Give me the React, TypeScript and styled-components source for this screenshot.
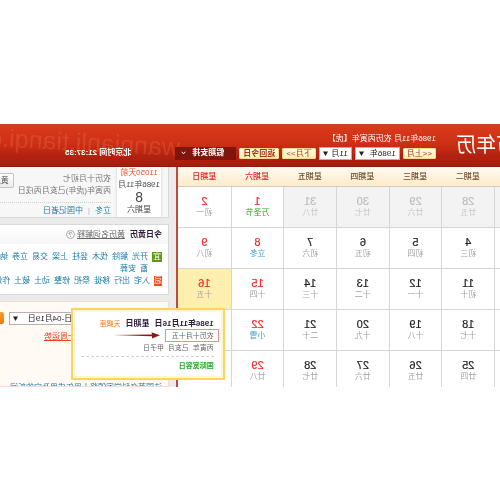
import React from "react";
import styled, { createGlobalStyle, css } from "styled-components";

const GlobalStyle = createGlobalStyle`
  * { box-sizing: border-box; }
  body {
    margin: 0;
    background: #fff;
    color: #555;
    font: 8px/12px "Liberation Sans", "Noto Sans CJK SC", sans-serif;
    overflow-x: hidden;
  }
  button, select { font: inherit; color: inherit; margin: 0; }
  a { color: inherit; text-decoration: none; }
`;

/* The whole page is shown as a mirror image. */
const Mirror = styled.main`
  margin-top: 124px;
  overflow: hidden;
  white-space: nowrap;
  transform: scaleX(-1);
`;

const Header = styled.header`
  position: relative;
  display: flex;
  height: 43px;
  overflow: hidden;
  color: #fff;
  background: linear-gradient(#d93a1b 0%, #cd3014 45%, #b32210 75%, #a51d0d 100%);
  border-top: 1px solid #b8432f;
  border-bottom: 1px solid #8f1a0c;
`;

const Watermark = styled.span`
  position: absolute;
  left: 64%;
  top: 8px;
  font-size: 25px;
  line-height: 28px;
  color: rgba(255, 150, 120, 0.2);
  transform: rotate(-3deg);
  transform-origin: left center;
`;

const Title = styled.h1`
  margin: 7px 20px 0 -16px;
  font-size: 20px;
  line-height: 26px;
  font-weight: 400;
`;

const Info = styled.div`
  position: relative;
  padding-top: 8px;
`;

const Controls = styled.div`
  display: flex;
  align-items: center;
  gap: 3px;
  height: 16px;
`;

const PaleButton = styled.button`
  padding: 0 3px;
  height: 11px;
  line-height: 9px;
  border: 1px solid #f6dc8a;
  border-radius: 1px;
  background: linear-gradient(#fffbe6, #fdeeb0);
  color: #a13b10;
`;

const TodayButton = styled(PaleButton)`
  width: 40px;
  font-weight: 700;
`;

const Picker = styled.span<{ $width: number }>`
  position: relative;
  display: block;
  flex: none;
  width: ${(p) => p.$width}px;
  height: 13px;
  color: #222;

  select {
    display: block;
    appearance: none;
    width: 100%;
    height: 100%;
    padding: 0 3px;
    border: 1px solid #b9b0ad;
    border-radius: 0;
    background: #fff;
    line-height: 11px;
  }

  svg {
    position: absolute;
    right: 4px;
    top: 4px;
    pointer-events: none;
  }
`;

const HolidayButton = styled.button`
  display: flex;
  align-items: center;
  justify-content: space-between;
  width: 61px;
  height: 13px;
  padding: 0 6px;
  border: 0;
  background: #7f150b;
  color: #fff;
  font-weight: 700;
`;

const Clock = styled.strong`
  margin-left: 41px;
`;

const Body = styled.div`
  display: grid;
  grid-template-columns: minmax(0, 324fr) minmax(0, 176fr);
`;

const CalendarPane = styled.section`
  position: relative;
  z-index: 1;
  border-right: 2px solid #bf4a40;
`;

const Calendar = styled.table`
  width: 100%;
  table-layout: fixed;
  border-collapse: separate;
  border-spacing: 0;
`;

const EdgeCol = styled.col`
  width: 6px;
`;

const DayName = styled.th<{ $weekend?: boolean }>`
  height: 20px;
  padding: 0;
  border-bottom: 1px solid #d3cbc0;
  background: linear-gradient(#fffaf0, #fdebcb);
  color: ${(p) => (p.$weekend ? "#e02222" : "#6b5030")};
  font-weight: 500;
`;

type CellKind = "out" | "weekend" | "today" | undefined;

const DayCell = styled.td<{ $kind?: CellKind; $last?: boolean }>`
  height: ${(p) => (p.$last ? 36 : 41)}px;
  padding: 7px 0 0;
  vertical-align: top;
  text-align: center;
  border-right: 1px solid #d6d6d6;
  border-bottom: ${(p) => (p.$last ? 0 : 1)}px solid #d6d6d6;
  color: #222;

  &:first-child { padding: 0; }
  &:last-child { border-right: 0; }

  ${(p) => p.$kind === "out" && css`background: #f3f3f3; color: #bdbdbd;`}
  ${(p) => (p.$kind === "weekend" || p.$kind === "today") && css`color: #f02a2a;`}
  ${(p) => p.$kind === "today" && css`position: relative; background: #feefaf;`}
`;

const DayNumber = styled.span`
  display: block;
  font-size: 11px;
  line-height: 14px;
  -webkit-text-stroke: 0.2px currentColor;
`;

const Lunar = styled.span<{ $color?: string }>`
  display: block;
  font-size: 8px;
  line-height: 10px;
  color: ${(p) => p.$color ?? "#a3a3a3"};
`;

const Popup = styled.aside`
  position: absolute;
  z-index: 2;
  left: 6px;
  top: 39px;
  width: 154px;
  height: 72px;
  padding: 8px 8px 0 9px;
  border: 2px solid #fdd45c;
  background: #fff;
  box-shadow: inset 0 0 0 2px #fff6d2;
  color: #666;
  text-align: left;
  font-size: 7px;
  line-height: 11px;
`;

const PopupHead = styled.div`
  display: flex;
  gap: 5px;
  font-size: 8px;
  color: #2c1c38;
`;

const Sign = styled.span`
  font-size: 7px;
  color: #ff7a1c;
`;

const Marked = styled.div`
  display: flex;
  align-items: center;
  gap: 5px;
  margin-left: -5px;
`;

const MarkedText = styled.span`
  width: 54px;
  height: 13px;
  padding-left: 4px;
  line-height: 11px;
  border: 1px solid #f58a8a;
`;

const Festival = styled.div`
  margin-top: 3px;
  padding-top: 3px;
  border-top: 1px dashed #d4d4d4;
  color: #25a82c;
  font-weight: 700;
`;

const Side = styled.section`
  display: flex;
  flex-direction: column;
  gap: 6px;
  padding-left: 7px;
  background: #ebebeb;
  overflow: hidden;
`;

const Panel = styled.div<{ $warm?: boolean; $grow?: boolean }>`
  border: 1px solid ${(p) => (p.$warm ? "#f3ddd0" : "#d9d9d9")};
  border-right: 0;
  background: ${(p) => (p.$warm ? "#fffaf3" : "#fff")};
  flex: ${(p) => (p.$grow ? "1 0 auto" : "none")};
`;

const DayPanel = styled(Panel)`
  display: flex;
  height: 51px;
  padding-left: 7px;
  border-top: 0;
  background: #f7f7f7;
`;

const DayCard = styled.div`
  width: 44px;
  height: 50px;
  background: #fff;
  box-shadow: 0 0 3px #d0d0d0;
  text-align: center;
  line-height: 12px;
  color: #444;
`;

const Ago = styled.div`
  color: #f2502c;
`;

const BigDay = styled.div`
  font-size: 14px;
  line-height: 13px;
`;

const DayText = styled.div`
  flex: 1;
  min-width: 0;
  padding: 6px 0 0 6px;
  color: #777;
`;

const DayLines = styled.div`
  display: flex;
  gap: 4px;
`;

const GreyButton = styled.button`
  flex: none;
  height: 15px;
  padding: 0 4px;
  border: 1px solid #c4c4c4;
  border-radius: 2px;
  background: linear-gradient(#fff, #ececec);
  color: #555;
`;

const Festivals = styled.div`
  display: flex;
  gap: 5px;
  margin-top: 5px;
  padding-top: 2px;
  border-top: 1px dotted #d0d0d0;
  color: #bbb;
  a { color: #1d7ca6; }
`;

const AlmanacPanel = styled(Panel)`
  height: 71px;
`;

const AlmanacHead = styled.div`
  display: flex;
  align-items: center;
  gap: 5px;
  height: 19px;
  padding-left: 6px;
  background: linear-gradient(#fff, #f6f6f6);

  h2 { margin: 0; font-size: 8px; color: #2c1c38; }
  a { color: #666; text-decoration: underline; }
  svg { margin-left: -3px; }
`;

const AlmanacList = styled.div`
  padding: 7px 0 0 6px;
  color: #1d7ca6;
`;

const AlmanacRow = styled.div`
  display: flex;
  gap: 4px;
`;

const Badge = styled.span<{ $color: string }>`
  width: 10px;
  height: 10px;
  margin: 1px 0;
  background: ${(p) => p.$color};
  color: #fff;
  line-height: 10px;
  text-align: center;
`;

const WordLine = styled.span`
  display: flex;
  gap: 4px;
`;

const FortunePanel = styled(Panel)`
  display: flex;
  flex-direction: column;
  padding: 10px 0 0 66px;
`;

const FortuneRow = styled.div`
  display: flex;
  gap: 5px;
`;

const OrangeButton = styled.button`
  flex: none;
  width: 30px;
  height: 12px;
  padding: 0 4px;
  border: 0;
  border-radius: 2px;
  background: linear-gradient(#ff9d2a, #f97808);
  color: #fff;
  text-align: left;
`;

const FortuneLink = styled.a`
  align-self: flex-start;
  margin: 6px 0 0 26px;
  color: #f03c20;
  text-decoration: underline;
`;

const NewsLine = styled.a`
  height: 4px;
  margin: auto 0 0 -60px;
  line-height: 11px;
  overflow: hidden;
  color: #1d7ca6;
`;

const Triangle = () => (
  <svg width="5" height="5" viewBox="0 0 5 5" aria-hidden="true">
    <path d="M0 0.5h5L2.5 5z" fill="#222" />
  </svg>
);

type Day = { n: number; l: string; k?: CellKind; c?: string };

const weeks: (Day | null)[][] = [
  [
    { n: 28, l: "廿五", k: "out", c: "#c8c8c8" },
    { n: 29, l: "廿六", k: "out", c: "#c8c8c8" },
    { n: 30, l: "廿七", k: "out", c: "#c8c8c8" },
    { n: 31, l: "廿八", k: "out", c: "#c8c8c8" },
    { n: 1, l: "万圣节", k: "weekend", c: "#25a82c" },
    { n: 2, l: "初一", k: "weekend" },
  ],
  [
    { n: 4, l: "初三" },
    { n: 5, l: "初四" },
    { n: 6, l: "初五" },
    { n: 7, l: "初六" },
    { n: 8, l: "立冬", k: "weekend", c: "#3a9bc8" },
    { n: 9, l: "初八", k: "weekend" },
  ],
  [
    { n: 11, l: "初十" },
    { n: 12, l: "十一" },
    { n: 13, l: "十二" },
    { n: 14, l: "十三" },
    { n: 15, l: "十四", k: "weekend" },
    { n: 16, l: "十五", k: "today" },
  ],
  [
    { n: 18, l: "十七" },
    { n: 19, l: "十八" },
    { n: 20, l: "十九" },
    { n: 21, l: "二十" },
    { n: 22, l: "小雪", k: "weekend", c: "#3a9bc8" },
    null,
  ],
  [
    { n: 25, l: "廿四" },
    { n: 26, l: "廿五" },
    { n: 27, l: "廿六" },
    { n: 28, l: "廿七" },
    { n: 29, l: "廿八", k: "weekend" },
    null,
  ],
];

const dayNames = ["星期二", "星期三", "星期四", "星期五", "星期六", "星期日"];
const suitable = ["开光", "解除", "伐木", "竖柱", "上梁", "交易", "立券", "纳"];
const suitableRest = ["畜", "安葬"];
const avoid = ["入宅", "出行", "移徙", "祭祀", "修整", "动土", "破土", "作灶"];

function WordList({ words }: { words: string[] }) {
  return (
    <WordLine>
      {words.map((word) => <span key={word}>{word}</span>)}
    </WordLine>
  );
}

function DayPopup() {
  return (
    <Popup>
      <PopupHead>
        <strong>1986年11月16日</strong>
        <strong>星期日</strong>
        <Sign>天蝎座</Sign>
      </PopupHead>
      <Marked>
        <MarkedText>农历十月十五</MarkedText>
        <svg width="47" height="7" viewBox="0 0 47 7" aria-hidden="true">
          <path d="M47 3.1L8 2.4L8.5 0.2L0 3.2L8 6.6L8 4.2z" fill="#8e1616" />
        </svg>
      </Marked>
      <div>丙寅年&nbsp; 己亥月&nbsp; 甲子日</div>
      <Festival>国际宽容日</Festival>
    </Popup>
  );
}

export default function App() {
  return (
    <>
      <GlobalStyle />
      <Mirror>
        <Header>
          <Watermark>wannianli.tianqi.com</Watermark>
          <Title>万年历</Title>
          <Info>
            <div>1986年11月 农历丙寅年【虎】</div>
            <Controls>
              <PaleButton>&lt;&lt;上月</PaleButton>
              <Picker $width={45}>
                <select aria-label="年份"><option>1986年</option></select>
                <Triangle />
              </Picker>
              <Picker $width={33}>
                <select aria-label="月份"><option>11月</option></select>
                <Triangle />
              </Picker>
              <PaleButton>下月&gt;&gt;</PaleButton>
              <TodayButton>返回今日</TodayButton>
              <HolidayButton>
                <span />
                假期安排
                <svg width="5" height="4" viewBox="0 0 5 4" aria-hidden="true">
                  <path d="M0.5 0.7L2.5 2.8L4.5 0.7" fill="none" stroke="#fff" />
                </svg>
              </HolidayButton>
              <Clock>北京时间 21:37:35</Clock>
            </Controls>
          </Info>
        </Header>

        <Body>
          <CalendarPane>
            <Calendar>
              <colgroup>
                <EdgeCol />
                {dayNames.map((d) => <col key={d} />)}
              </colgroup>
              <thead>
                <tr>
                  <DayName />
                  {dayNames.map((d, i) => (
                    <DayName key={d} $weekend={i > 3}>{d}</DayName>
                  ))}
                </tr>
              </thead>
              <tbody>
                {weeks.map((week, w) => {
                  const last = w === weeks.length - 1;
                  return (
                    <tr key={w}>
                      <DayCell $kind={w === 0 ? "out" : undefined} $last={last} />
                      {week.map((d, i) => (
                        <DayCell key={i} $kind={d?.k} $last={last}>
                          {d && <DayNumber>{d.n}</DayNumber>}
                          {d && <Lunar $color={d.c}>{d.l}</Lunar>}
                          {d?.k === "today" && <DayPopup />}
                        </DayCell>
                      ))}
                    </tr>
                  );
                })}
              </tbody>
            </Calendar>
          </CalendarPane>

          <Side>
            <DayPanel>
              <DayCard>
                <Ago>11050天前</Ago>
                <div>1986年11月</div>
                <BigDay>8</BigDay>
                <div>星期六</div>
              </DayCard>
              <DayText>
                <DayLines>
                  <div>
                    <div>农历十月初七</div>
                    <div>丙寅年(虎年)己亥月丙戌日</div>
                  </div>
                  <GreyButton>黄历</GreyButton>
                </DayLines>
                <Festivals>
                  <a href="#lidong">立冬</a>|<a href="#reporters">中国记者日</a>
                </Festivals>
              </DayText>
            </DayPanel>

            <AlmanacPanel>
              <AlmanacHead>
                <h2>今日黄历</h2>
                <a href="#terms">黄历名词解释</a>
                <svg width="9" height="9" viewBox="0 0 9 9" aria-hidden="true">
                  <circle cx="4.5" cy="4.5" r="4" fill="#fff" stroke="#999" strokeWidth="0.8" />
                  <path d="M3.2 3.6c0-1.8 2.6-1.6 2.6-0.2c0 0.9-1.3 0.9-1.3 2M4.5 6.2v0.9" fill="none" stroke="#777" strokeWidth="0.8" />
                </svg>
              </AlmanacHead>
              <AlmanacList>
                <AlmanacRow>
                  <Badge $color="#5a9a10">宜</Badge>
                  <div>
                    <WordList words={suitable} />
                    <WordList words={suitableRest} />
                  </div>
                </AlmanacRow>
                <AlmanacRow>
                  <Badge $color="#fa4a10">忌</Badge>
                  <WordList words={avoid} />
                </AlmanacRow>
              </AlmanacList>
            </AlmanacPanel>

            <FortunePanel $warm $grow>
              <FortuneRow>
                <Picker $width={93}>
                  <select aria-label="星座"><option>03月21日-04月19日</option></select>
                  <Triangle />
                </Picker>
                <OrangeButton>查询</OrangeButton>
              </FortuneRow>
              <FortuneLink href="#week">一周运势</FortuneLink>
              <NewsLine href="#news">法国著名科学家颁奖十周年成果及它的新闻</NewsLine>
            </FortunePanel>
          </Side>
        </Body>
      </Mirror>
    </>
  );
}
